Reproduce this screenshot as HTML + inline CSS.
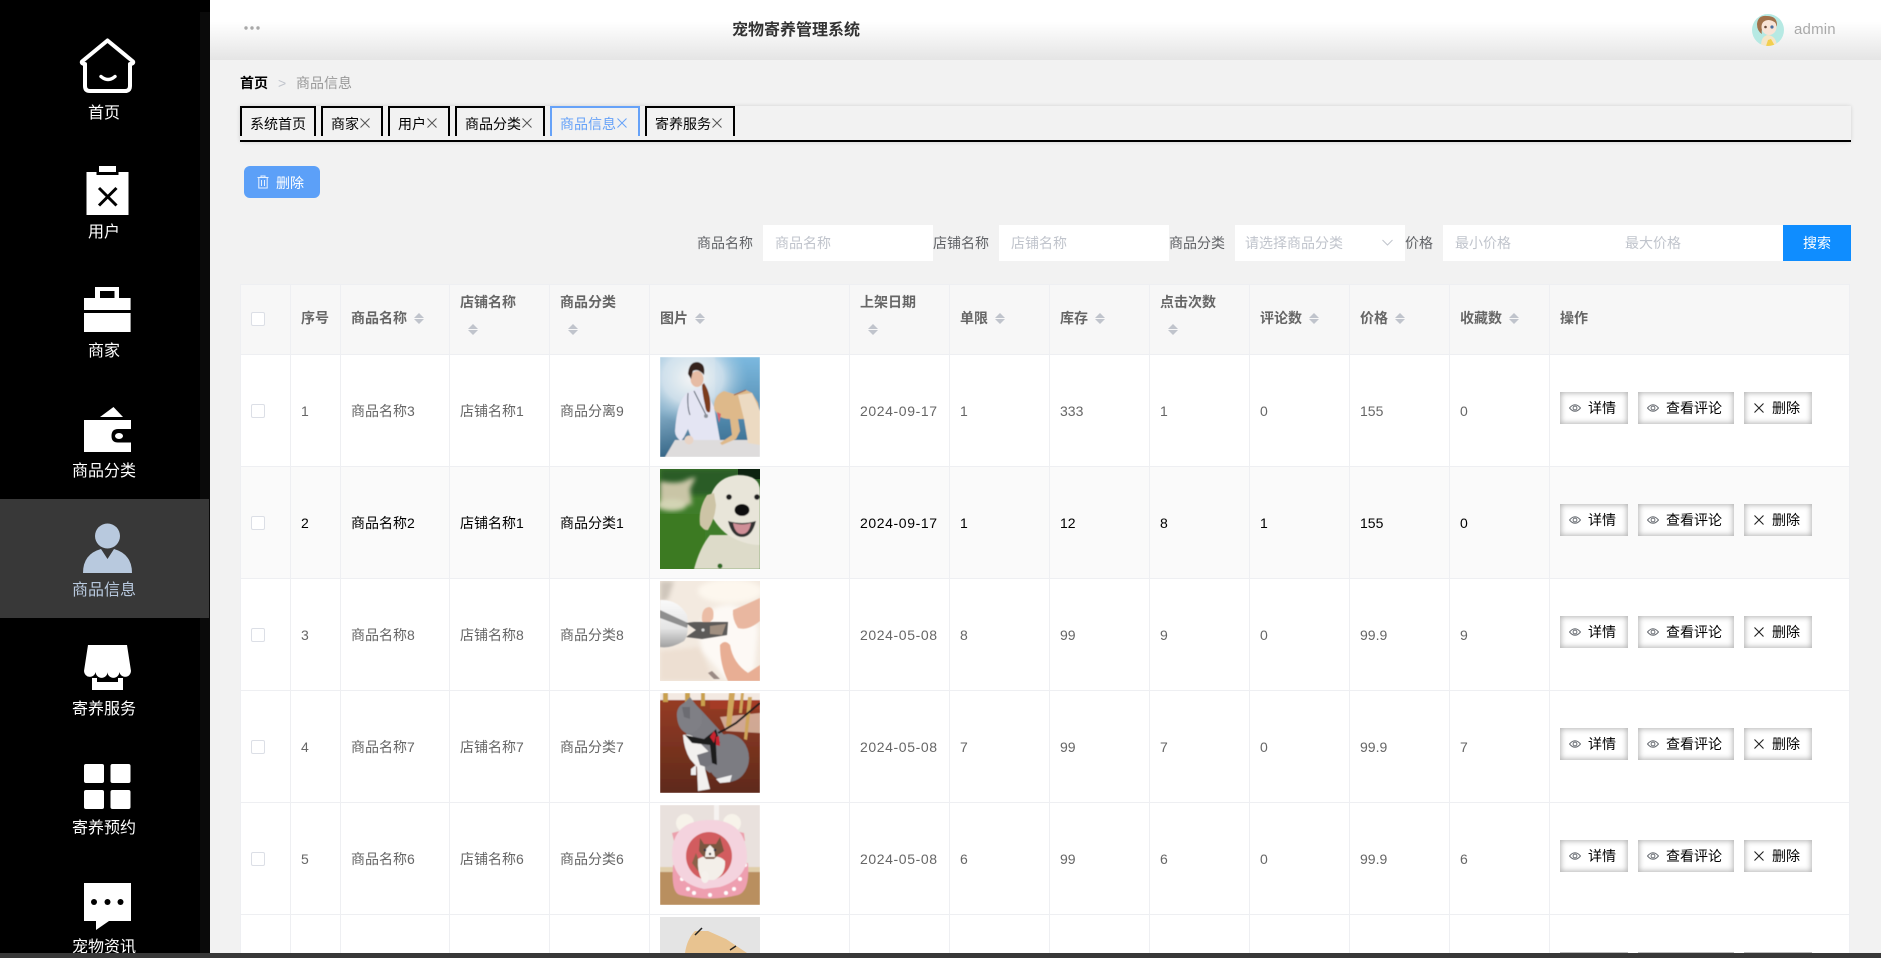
<!DOCTYPE html>
<html lang="zh-CN">
<head>
<meta charset="utf-8">
<title>宠物寄养管理系统</title>
<style>
*{box-sizing:border-box}
html,body{margin:0;padding:0;width:1881px;height:958px;overflow:hidden;background:#f2f2f2}
body{position:relative;font-family:"Liberation Sans","Noto Sans CJK SC",sans-serif;font-size:14px;color:#606266}
.a{position:absolute;white-space:nowrap}
#side{position:absolute;left:0;top:0;width:210px;height:958px;background:#000;overflow:hidden}
#side .edge{position:absolute;left:200px;top:12px;width:10px;height:946px;background:#0a0a0a}
#side .act{position:absolute;left:0;top:499px;width:209px;height:119px;background:#383838}
#side svg{position:absolute;left:0;top:0}
.lab{position:absolute;left:-1px;width:210px;text-align:center;color:#fff;font-size:16px;line-height:20px;height:20px}
#head{position:absolute;left:210px;top:0;width:1671px;height:60px;background:linear-gradient(180deg,#fff 0,#fff 36%,#e5e5e5 100%)}
.tab{position:absolute;top:106px;height:30px;border:2px solid #000;border-bottom:0;color:#000;line-height:32px;padding-left:8px;background:#f2f2f2}
.tab svg{position:absolute;top:10px}
.tab.on{border-color:#66a2f8;color:#66a2f8}
.box{position:absolute;background:#fff;top:225px;height:36px}
.sl{position:absolute;top:225px;line-height:36px;color:#606266;white-space:nowrap}
.spl{position:absolute;top:225px;line-height:36px;color:#c0c4cc;white-space:nowrap}
#tw{position:absolute;left:240px;top:284px;width:1610px;height:669px;overflow:hidden}
table{position:absolute;left:0;top:0;width:1610px;border-collapse:separate;border-spacing:0;table-layout:fixed;background:#fff}
th,td{border-left:1px solid #eeeff2;border-top:1px solid #eeeff2;padding:0 0 0 10px;text-align:left;position:relative;font-size:14px;line-height:20px;overflow:visible}
th:last-child,td:last-child{border-right:1px solid #eeeff2}
thead th{background:#f7f7f7;height:70px;color:#666;font-weight:700;vertical-align:middle;padding-bottom:3px}
tbody td{height:112px;color:#666;vertical-align:middle;padding-top:1px}
tbody tr.h td{background:#fafafa;color:#000}
tbody tr.e td{height:39px;padding:0}
.d{letter-spacing:.6px}
.cb{display:inline-block;width:14px;height:14px;background:#fff;border:1px solid #dcdfe6;border-radius:2px;vertical-align:middle}
th .cb{position:absolute;left:10px;top:27px}
td .cb{position:absolute;left:10px;top:49px}
.c{display:inline-block;width:10px;height:11px;position:relative;margin-left:7px;vertical-align:-1px}
.c:before,.c:after{content:"";position:absolute;left:0;border-left:5px solid transparent;border-right:5px solid transparent}
.c:before{top:0;border-bottom:5px solid #c0c4cc}
.c:after{bottom:0;border-top:5px solid #c0c4cc}
.t2{position:absolute;left:10px;top:7px}
.t2 .c{position:absolute;left:8px;top:32px;margin:0}
.pic{position:absolute;left:10px;top:2px;width:100px;height:100px;display:block}
.b{position:absolute;top:37px;height:32px;background:#fff;box-shadow:inset 0 0 6px 1px #b4b4b4;color:#000;line-height:32px;white-space:nowrap}
.b span{position:absolute;top:0}
.b svg{position:absolute;top:11px}
.b1{left:10px;width:68px}.b1 span{left:28px}.b1 svg{left:9px}
.b2{left:88px;width:96px}.b2 span{left:28px}.b2 svg{left:9px}
.b3{left:194px;width:68px}.b3 span{left:28px}.b3 svg{left:10px}
#bar{position:absolute;left:0;top:953px;width:1881px;height:5px;background:#383838}
</style>
</head>
<body>
<svg width="0" height="0" style="position:absolute">
<defs><filter id="soft"><feGaussianBlur stdDeviation=".45"/></filter><filter id="sb"><feGaussianBlur stdDeviation="2.500"/></filter></defs>
<symbol id="eye" viewBox="0 0 12 10"><path d="M.5 5Q6-1.500 11.500 5 6 11.500.5 5Z" fill="none" stroke="#6b6f75" stroke-width="1"/><circle cx="6" cy="5" r="1.900" fill="none" stroke="#6b6f75" stroke-width="1"/></symbol>
<symbol id="xx" viewBox="0 0 10 10"><path d="M.5.5 9.500 9.500M9.500.5.5 9.500" fill="none" stroke="#222" stroke-width="1.100"/></symbol>
</svg>

<div id="side">
  <div class="edge"></div>
  <div class="act"></div>
  <svg width="210" height="958" viewBox="0 0 210 958">
    <path d="M107.500 40.500 82 61.500Q81 63.600 85 64V86Q85 91 90 91H125Q130 91 130 86V64Q134 63.600 133 61.500Z" fill="none" stroke="#fff" stroke-width="4" stroke-linejoin="round"/>
    <path d="M101 76.500Q108 82.500 115 76.500" fill="none" stroke="#fff" stroke-width="3.400" stroke-linecap="round"/>
    <rect x="86.500" y="172" width="42" height="43" fill="#fff"/>
    <rect x="96.500" y="170" width="22" height="5" fill="#000"/>
    <rect x="99" y="166" width="17" height="6" fill="#fff"/>
    <path d="M99 188 116.500 205.500M116.500 188 99 205.500" stroke="#000" stroke-width="3" fill="none"/>
    <path d="M95 298V287H119V298H114.500V291H100V298Z" fill="#fff"/>
    <rect x="84" y="298" width="46.600" height="12" fill="#fff"/>
    <rect x="84" y="313" width="46.600" height="19" fill="#fff"/>
    <path d="M100 417 113.500 407 123 417Z" fill="#fff"/>
    <path d="M84 420H131V429H118Q111.500 429 111.500 436 111.500 442.500 118 442.500H131V452H84Z" fill="#fff"/>
    <ellipse cx="119" cy="436" rx="4" ry="3" fill="#fff"/>
    <circle cx="107.500" cy="536" r="12.500" fill="#b8c9de"/>
    <path d="M83 573Q83 554 101 549L107.500 559 114 549Q132 554 132 573Z" fill="#b8c9de"/>
    <path d="M88 645H127L131 671A5.900 5.900 0 0 1 119.300 672 5.900 5.900 0 0 1 107.500 672 5.900 5.900 0 0 1 95.700 672 5.900 5.900 0 0 1 84 671Z" fill="#fff"/>
    <path d="M92 678H97V682H118V678H123V690H92Z" fill="#fff"/>
    <rect x="84" y="764" width="20" height="19" rx="2" fill="#fff"/>
    <rect x="110.500" y="764" width="20" height="19" rx="2" fill="#fff"/>
    <rect x="84" y="790" width="20" height="19" rx="2" fill="#fff"/>
    <rect x="110.500" y="790" width="20" height="19" rx="2" fill="#fff"/>
    <path d="M84 883H131V921H109L96 930V921H84Z" fill="#fff"/>
    <circle cx="94" cy="902" r="3" fill="#000"/><circle cx="107.500" cy="902" r="3" fill="#000"/><circle cx="120.500" cy="902" r="3" fill="#000"/>
  </svg>
  <div class="lab" style="top:104px">首页</div>
  <div class="lab" style="top:223px">用户</div>
  <div class="lab" style="top:342px">商家</div>
  <div class="lab" style="top:462px">商品分类</div>
  <div class="lab" style="top:581px;color:#b8c9de">商品信息</div>
  <div class="lab" style="top:700px">寄养服务</div>
  <div class="lab" style="top:819px">寄养预约</div>
  <div class="lab" style="top:938px">宠物资讯</div>
</div>

<div id="head"></div>
<svg class="a" style="left:244px;top:25px" width="16" height="6" viewBox="0 0 16 6"><circle cx="2" cy="3" r="1.700" fill="#a8a8a8"/><circle cx="8" cy="3" r="1.700" fill="#a8a8a8"/><circle cx="14" cy="3" r="1.700" fill="#a8a8a8"/></svg>
<div class="a" style="left:732px;top:21px;font-size:16px;line-height:20px;font-weight:700;color:#333">宠物寄养管理系统</div>
<svg class="a" style="left:1752px;top:14px" width="32" height="32" viewBox="0 0 32 32">
  <defs><clipPath id="av"><circle cx="16" cy="16" r="16"/></clipPath></defs>
  <g clip-path="url(#av)">
    <rect width="32" height="32" fill="#b6e9e3"/>
    <path d="M5 10Q6 1 15 2 25 2 25 11 25 14 23 11L11 11Q9 18 10 20 5 17 5 10Z" fill="#a0714a"/>
    <ellipse cx="17" cy="13" rx="7.500" ry="8" fill="#f8e3d6"/>
    <path d="M10 9Q16 3 24 9 24 5 17 4 11 4 10 9Z" fill="#a0714a"/>
    <circle cx="20" cy="13" r="1.600" fill="#4a6fa0"/><circle cx="13.500" cy="13" r="1.300" fill="#6a4a3a"/>
    <path d="M9 32Q9 22 16 21 24 22 25 32Z" fill="#f5e6c8"/>
    <path d="M14 32 16 26 19 25 23 32Z" fill="#f2cf4e"/>
  </g>
</svg>
<div class="a" style="left:1794px;top:20px;line-height:20px;color:#a9a9a9;font-size:15px;letter-spacing:.2px">admin</div>

<div class="a" style="left:240px;top:73px;line-height:20px;font-weight:700;color:#000">首页</div>
<div class="a" style="left:278px;top:73px;line-height:20px;color:#c0c4cc">&gt;</div>
<div class="a" style="left:296px;top:73px;line-height:20px;color:#999">商品信息</div>

<div class="a" style="left:240px;top:106px;width:1611px;height:36px;border-bottom:2px solid #000;box-shadow:0 0 4px rgba(0,0,0,.13);background:#f2f2f2"></div>
<div class="tab" style="left:240px;width:76px">系统首页</div>
<div class="tab" style="left:321px;width:62px">商家<svg style="left:37px" width="10" height="10" viewBox="0 0 10 10"><path d="M.5.5 9.500 9.500M9.500.5.5 9.500" stroke="#555" fill="none"/></svg></div>
<div class="tab" style="left:388px;width:62px">用户<svg style="left:37px" width="10" height="10" viewBox="0 0 10 10"><path d="M.5.5 9.500 9.500M9.500.5.5 9.500" stroke="#555" fill="none"/></svg></div>
<div class="tab" style="left:455px;width:90px">商品分类<svg style="left:65px" width="10" height="10" viewBox="0 0 10 10"><path d="M.5.5 9.500 9.500M9.500.5.5 9.500" stroke="#555" fill="none"/></svg></div>
<div class="tab on" style="left:550px;width:90px">商品信息<svg style="left:65px" width="10" height="10" viewBox="0 0 10 10"><path d="M.5.5 9.500 9.500M9.500.5.5 9.500" stroke="#66a2f8" fill="none"/></svg></div>
<div class="tab" style="left:645px;width:90px">寄养服务<svg style="left:65px" width="10" height="10" viewBox="0 0 10 10"><path d="M.5.5 9.500 9.500M9.500.5.5 9.500" stroke="#555" fill="none"/></svg></div>

<div class="a" style="left:244px;top:166px;width:76px;height:32px;background:#5ca0f8;border-radius:6px;color:#fff;line-height:34px">
  <svg style="position:absolute;left:13px;top:9px" width="12" height="14" viewBox="0 0 12 14"><path d="M.5 2.500H11.500M4 2.500V1H8V2.500M1.800 3V13H10.200V3M4.500 5V11M7.500 5V11" fill="none" stroke="#e8f2ff" stroke-width="1"/></svg>
  <span style="position:absolute;left:32px">删除</span>
</div>

<div class="sl" style="left:697px">商品名称</div>
<div class="box" style="left:763px;width:170px"></div><div class="spl" style="left:775px">商品名称</div>
<div class="sl" style="left:933px">店铺名称</div>
<div class="box" style="left:999px;width:170px"></div><div class="spl" style="left:1011px">店铺名称</div>
<div class="sl" style="left:1169px">商品分类</div>
<div class="box" style="left:1235px;width:170px"></div><div class="spl" style="left:1245px">请选择商品分类</div>
<svg class="a" style="left:1382px;top:239px" width="11" height="7" viewBox="0 0 11 7"><path d="M.5 1 5.500 6 10.500 1" fill="none" stroke="#c0c4cc"/></svg>
<div class="sl" style="left:1405px">价格</div>
<div class="box" style="left:1443px;width:340px"></div><div class="spl" style="left:1455px">最小价格</div><div class="spl" style="left:1625px">最大价格</div>
<div class="a" style="left:1783px;top:225px;width:68px;height:36px;background:#0f8dff;color:#fff;line-height:36px;text-align:center">搜索</div>

<div id="tw">
<table>
<colgroup><col style="width:50px"><col style="width:50px"><col style="width:109px"><col style="width:100px"><col style="width:100px"><col style="width:200px"><col style="width:100px"><col style="width:100px"><col style="width:100px"><col style="width:100px"><col style="width:100px"><col style="width:100px"><col style="width:100px"><col style="width:301px"></colgroup>
<thead><tr>
<th><i class="cb"></i></th><th>序号</th><th>商品名称<i class="c"></i></th>
<th><div class="t2">店铺名称<i class="c"></i></div></th><th><div class="t2">商品分类<i class="c"></i></div></th>
<th>图片<i class="c"></i></th><th><div class="t2">上架日期<i class="c"></i></div></th>
<th>单限<i class="c"></i></th><th>库存<i class="c"></i></th><th><div class="t2">点击次数<i class="c"></i></div></th>
<th>评论数<i class="c"></i></th><th>价格<i class="c"></i></th><th>收藏数<i class="c"></i></th><th>操作</th>
</tr></thead>
<tbody>
<tr><td><i class="cb"></i></td><td>1</td><td>商品名称3</td><td>店铺名称1</td><td>商品分离9</td>
<td><svg class="pic" viewBox="0 0 100 100">
  <defs>
    <linearGradient id="g1a" x1=".1" y1="0" x2=".3" y2="1"><stop offset="0" stop-color="#a8cbe2"/><stop offset=".5" stop-color="#86aec8"/><stop offset="1" stop-color="#2d5f80"/></linearGradient>
    <radialGradient id="g1b" cx=".33" cy=".25" r=".55"><stop offset="0" stop-color="#f6f6f6"/><stop offset=".55" stop-color="#dce8f0" stop-opacity=".8"/><stop offset="1" stop-color="#9cc4dc" stop-opacity="0"/></radialGradient>
    <linearGradient id="g1c" x1="0" y1="0" x2="0" y2="1"><stop offset="0" stop-color="#78b8e0"/><stop offset="1" stop-color="#3f7598"/></linearGradient>
  </defs>
  <g filter="url(#soft)">
  <rect width="100" height="100" fill="url(#g1a)"/>
  <rect x="55" width="45" height="85" fill="url(#g1c)" opacity=".9"/>
  <rect width="100" height="85" fill="url(#g1b)"/>
  <path d="M5 100 15 83H100V100Z" fill="#dedcdc"/>
  <path d="M15 74Q17 44 27 36L38 31 47 36 54 50 60 83H32L28 72 24 80 21 84Q15 80 15 74Z" fill="#e4e5f3"/>
  <path d="M28 36Q27 50 30 58M34 34Q38 42 46 58" fill="none" stroke="#3a4555" stroke-width=".9"/>
  <circle cx="46" cy="59" r="2" fill="#8a8f98"/>
  <path d="M44 26Q52 38 50 55 46 57 45 48 42 35 42 28Z" fill="#7c3a1e"/>
  <ellipse cx="37" cy="22" rx="6.500" ry="8" fill="#e6bca4"/>
  <path d="M28 17Q29 5 37 5 46 6 44 18 38 11 33 14L31 22Z" fill="#35211a"/>
  <circle cx="29" cy="83" r="4.500" fill="#e8d4c6"/>
  <path d="M54 52Q53 38 64 34L74 37 86 33 92 36 98 46 100 56V88L96 84 86 62 78 62 80 74 76 82 62 88 60 86 72 78 70 62Q62 62 58 58Z" fill="#deb98a"/>
  <path d="M78 38 92 36 100 54V88L88 86 84 62Z" fill="#ecdac2"/>
  <path d="M57 55 59 66 61 57Z" fill="#d9606a"/>
  <path d="M74 38 86 33" stroke="#9a5f46" stroke-width="1" fill="none"/>
  </g>
</svg></td>
<td class="d">2024-09-17</td><td>1</td><td>333</td><td>1</td><td>0</td><td>155</td><td>0</td>
<td><div class="b b1"><svg width="12" height="10"><use href="#eye"/></svg><span>详情</span></div><div class="b b2"><svg width="12" height="10"><use href="#eye"/></svg><span>查看评论</span></div><div class="b b3"><svg width="10" height="10"><use href="#xx"/></svg><span>删除</span></div></td></tr>

<tr class="h"><td><i class="cb"></i></td><td>2</td><td>商品名称2</td><td>店铺名称1</td><td>商品分类1</td>
<td><svg class="pic" viewBox="0 0 100 100">
  <rect width="100" height="100" fill="#3f7d2a"/>
  <rect y="0" width="100" height="26" fill="#2a5c26" filter="url(#sb)"/>
  <rect x="78" width="22" height="10" fill="#0d2310"/>
  <g filter="url(#sb)"><path d="M0 12Q20 16 28 10L36 8 30 20 32 36 0 32Z" fill="#c9c5a6"/><ellipse cx="12" cy="36" rx="15" ry="6" fill="#d3d4b4"/></g>
  <rect y="45" width="45" height="55" fill="#3c7a22"/>
  <g filter="url(#soft)">
  <path d="M34 100Q40 78 50 66H100V100Z" fill="#dddbc9"/>
  <path d="M48 38Q52 8 78 6 100 6 100 22V76Q84 76 68 66 54 56 48 38Z" fill="#e8e5d9"/>
  <path d="M47 26Q38 40 40 56 44 62 48 61 55 50 56 36L54 24Z" fill="#cdc4a6"/>
  <circle cx="69" cy="28" r="2.800" fill="#1a1a1a"/><circle cx="97" cy="28" r="2.800" fill="#1a1a1a"/>
  <ellipse cx="82" cy="41" rx="7.500" ry="6" fill="#111"/>
  <path d="M68 52Q82 56 96 52 92 68 82 68 72 68 68 52Z" fill="#333"/>
  <path d="M73 54Q82 57 91 54 89 65 82 65 75 65 73 54Z" fill="#cf8f97"/>
  <circle cx="60" cy="97" r="2.500" fill="#2f6b20"/></g>
</svg></td>
<td class="d">2024-09-17</td><td>1</td><td>12</td><td>8</td><td>1</td><td>155</td><td>0</td>
<td><div class="b b1"><svg width="12" height="10"><use href="#eye"/></svg><span>详情</span></div><div class="b b2"><svg width="12" height="10"><use href="#eye"/></svg><span>查看评论</span></div><div class="b b3"><svg width="10" height="10"><use href="#xx"/></svg><span>删除</span></div></td></tr>

<tr><td><i class="cb"></i></td><td>3</td><td>商品名称8</td><td>店铺名称8</td><td>商品分类8</td>
<td><svg class="pic" viewBox="0 0 100 100">
  <defs><linearGradient id="g3" x1="0" y1="0" x2="0" y2="1"><stop offset="0" stop-color="#fafafa"/><stop offset=".6" stop-color="#e4e4e4"/><stop offset="1" stop-color="#a0a0a0"/></linearGradient></defs>
  <rect width="100" height="100" fill="#f3eae0"/>
  <g filter="url(#sb)"><path d="M0 0H14L8 18 0 22Z" fill="#cfc6bb"/><ellipse cx="70" cy="10" rx="32" ry="12" fill="#fdf7ee"/><path d="M38 50Q45 24 70 24 95 28 98 50L94 90 66 98 42 70Z" fill="#fdf9f5"/><path d="M0 70 40 66 54 100H0Z" fill="#eddfd2"/></g>
  <g filter="url(#soft)">
  <path d="M73 29Q85 24 100 17V40Q88 50 78 47 72 38 73 29Z" fill="#e9b7a0"/>
  <path d="M42 40Q41 27 49 26 55 27 53 38L47 44Z" fill="#ebbda6"/>
  <path d="M60 64Q65 58 70 64 73 82 88 92L100 84V100H68Q60 84 60 64Z" fill="#e8ae94"/>
  <path d="M48 92 54 98 60 98 52 90Z" fill="#9a8a84"/>
  <path d="M0 19Q18 18 27 34 30 52 24 60 10 68 0 66Z" fill="url(#g3)"/>
  <path d="M0 29 28 42 27 47 0 37Z" fill="#8f8f8f"/>
  <path d="M26 42 34 41 68 41 67 54 42 58 26 56 36 49Z" fill="#5c5a58"/>
  <path d="M50 45 66 43 62 54 50 53Z" fill="#a08f80"/>
  <circle cx="43" cy="49" r="1.500" fill="#ddd"/>
  </g>
</svg></td>
<td class="d">2024-05-08</td><td>8</td><td>99</td><td>9</td><td>0</td><td>99.9</td><td>9</td>
<td><div class="b b1"><svg width="12" height="10"><use href="#eye"/></svg><span>详情</span></div><div class="b b2"><svg width="12" height="10"><use href="#eye"/></svg><span>查看评论</span></div><div class="b b3"><svg width="10" height="10"><use href="#xx"/></svg><span>删除</span></div></td></tr>

<tr><td><i class="cb"></i></td><td>4</td><td>商品名称7</td><td>店铺名称7</td><td>商品分类7</td>
<td><svg class="pic" viewBox="0 0 100 100">
  <defs><linearGradient id="g4" x1="0" y1="0" x2="0" y2="1"><stop offset="0" stop-color="#9a3d24"/><stop offset="1" stop-color="#5e2a1c"/></linearGradient></defs>
  <g filter="url(#soft)">
  <rect width="100" height="100" fill="url(#g4)"/>
  <rect width="100" height="7" fill="#f3e9e2"/>
  <rect x="50" y="7" width="50" height="9" fill="#a53a28"/>
  <path d="M60 24 100 20V40L66 38Z" fill="#f0d8c4" opacity=".7"/>
  <path d="M3 0H8V9H3ZM25 0H30V10H25ZM41 0H45V13H41Z" fill="#c9a04e"/>
  <path d="M69 0H75L71 34 66 33ZM81 0H84L82 20H79ZM88 4H92L87 47 84 46Z" fill="#cfa55a"/>
  <ellipse cx="68" cy="65" rx="21" ry="24" fill="#7c7c82"/>
  <path d="M30 6 42 18 64 42 74 60 50 80 36 70 26 40Z" fill="#7c7c82"/>
  <path d="M23 42Q32 40 38 48L50 60Q44 66 45 76L50 96 38 98 37 74 30 66Q24 56 23 42Z" fill="#f2f0ee"/>
  <path d="M37 62 50 58 54 70 46 74 40 72Z" fill="#75757b"/>
  <path d="M56 86 72 82 70 89 60 90Z" fill="#efefef"/>
  <path d="M31 76 36 72 36 82 31 82Z" fill="#efefef"/>
  <path d="M17 24Q16 14 24 10L30 4 36 12Q44 20 42 30 36 42 26 40 18 36 17 24Z" fill="#7f7f85"/>
  <path d="M22 14 30 14 30 26 24 24Z" fill="#6c6c72"/>
  <path d="M25 42 44 46 54 38 56 36 60 50 56 52 57 72 52 70 50 52 32 50Z" fill="#1c1b1e"/>
  <path d="M50 44 54 38 56 42 54 50ZM56 44 59 43 60 53 56 52Z" fill="#c9232e"/>
  <path d="M100 10 76 30 66 36 58 40" fill="none" stroke="#1c1c1c" stroke-width="2"/>
  </g>
</svg></td>
<td class="d">2024-05-08</td><td>7</td><td>99</td><td>7</td><td>0</td><td>99.9</td><td>7</td>
<td><div class="b b1"><svg width="12" height="10"><use href="#eye"/></svg><span>详情</span></div><div class="b b2"><svg width="12" height="10"><use href="#eye"/></svg><span>查看评论</span></div><div class="b b3"><svg width="10" height="10"><use href="#xx"/></svg><span>删除</span></div></td></tr>

<tr><td><i class="cb"></i></td><td>5</td><td>商品名称6</td><td>店铺名称6</td><td>商品分类6</td>
<td><svg class="pic" viewBox="0 0 100 100">
  <g filter="url(#soft)">
  <rect width="100" height="100" fill="#e9e1dd"/>
  <rect x="54" width="5" height="15" fill="#f6f3f1"/>
  <rect y="62" width="100" height="5" fill="#e0ceaa"/>
  <rect y="67" width="100" height="33" fill="#b98f5f"/>
  <circle cx="25" cy="18" r="9" fill="#f7f3ea"/><circle cx="72" cy="18" r="9" fill="#f7f3ea"/>
  <path d="M12 28 20 26 22 36 14 36ZM84 28 76 26 76 36 85 36Z" fill="#eba0ac"/>
  <path d="M13 60Q11 88 20 90 50 97 78 90 90 86 88 58Z" fill="#ee9fb0"/>
  <circle cx="22" cy="74" r="2" fill="#fff"/><circle cx="34" cy="88" r="2" fill="#fff"/><circle cx="50" cy="90" r="2" fill="#fff"/><circle cx="66" cy="88" r="2" fill="#fff"/><circle cx="80" cy="74" r="2" fill="#fff"/><circle cx="85" cy="60" r="2" fill="#fff"/><circle cx="28" cy="84" r="2" fill="#fff"/><circle cx="74" cy="84" r="2" fill="#fff"/>
  <path d="M12 50Q12 15 50 15 86 15 87 52 86 74 60 82L44 84Q14 78 12 50Z" fill="#f4d3de"/>
  <ellipse cx="49" cy="51" rx="23" ry="24" fill="#d25c5f"/>
  <path d="M36 48 32 58 38 66 42 64Z" fill="#8a6248"/>
  <path d="M38 54Q44 50 50 52 60 50 65 56 66 70 54 75L42 75Q37 66 38 54Z" fill="#f3efe9"/>
  <path d="M40 33 44 39H56L60 32 64 46 58 50 54 54H46L42 50 39 46Z" fill="#7a5640"/>
  <path d="M46 44 50 40 54 44 55 52 45 52Z" fill="#f3efe9"/>
  <circle cx="50" cy="49" r="1.200" fill="#333"/><circle cx="45" cy="45" r="1.300" fill="#334"/><circle cx="55" cy="45" r="1.300" fill="#334"/>
  <ellipse cx="45" cy="72" rx="4" ry="6" fill="#f5f1ec"/>
  </g>
</svg></td>
<td class="d">2024-05-08</td><td>6</td><td>99</td><td>6</td><td>0</td><td>99.9</td><td>6</td>
<td><div class="b b1"><svg width="12" height="10"><use href="#eye"/></svg><span>详情</span></div><div class="b b2"><svg width="12" height="10"><use href="#eye"/></svg><span>查看评论</span></div><div class="b b3"><svg width="10" height="10"><use href="#xx"/></svg><span>删除</span></div></td></tr>

<tr class="e"><td></td><td></td><td></td><td></td><td></td>
<td><svg class="pic" style="height:36px" viewBox="0 0 100 36">
  <rect width="100" height="36" fill="#e4e4e4"/>
  <path d="M25 36Q27 22 35 14L48 14 66 22 87 36Z" fill="#e8c390"/>
  <path d="M35 18 42 11M70 33 76 29" stroke="#222" stroke-width="1.500" fill="none"/>
</svg></td>
<td></td><td></td><td></td><td></td><td></td><td></td><td></td>
<td><div class="b b1" style="height:1px;box-shadow:none;background:#bdbdbd"></div><div class="b b2" style="height:1px;box-shadow:none;background:#bdbdbd"></div><div class="b b3" style="height:1px;box-shadow:none;background:#bdbdbd"></div></td></tr>
</tbody>
</table>
</div>

<div id="bar"></div>
</body>
</html>
